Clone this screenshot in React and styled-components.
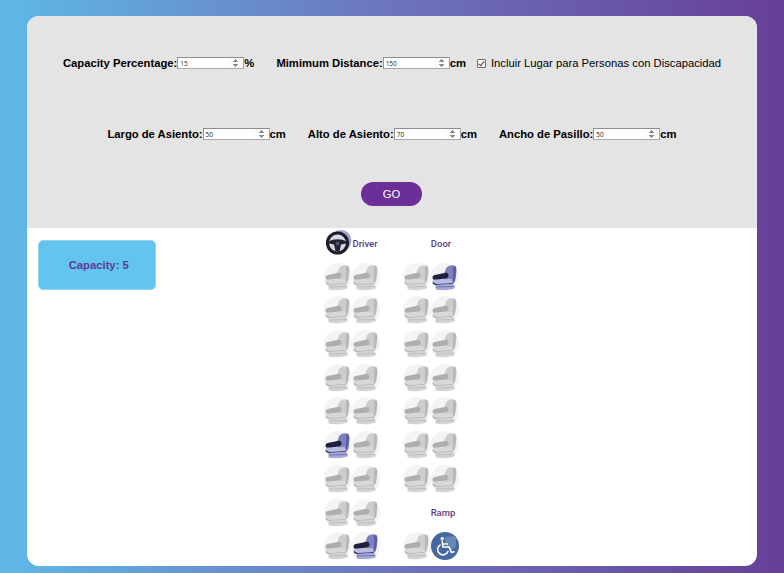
import styled, { createGlobalStyle } from "styled-components";

const GlobalStyle = createGlobalStyle`
  html, body {
    margin: 0;
    height: 100%;
  }
  body {
    font-family: "Liberation Sans", Arial, sans-serif;
    background: linear-gradient(to right, #5eb9e8 0%, #6d74bb 50%, #663f97 100%);
    min-height: 573px;
    overflow: hidden;
  }
`;

const Page = styled.div`
  height: 573px;
  padding: 16px 27px 7px;
  box-sizing: border-box;
`;

const Card = styled.div`
  width: 730px;
  height: 550px;
  background: #fff;
  border-radius: 12px;
  overflow: hidden;
`;

const Header = styled.div`
  height: 212px;
  background: #e4e4e4;
  box-sizing: border-box;
  padding-top: 40px;
  display: flex;
  flex-direction: column;
  align-items: center;
`;

const FormRow = styled.div`
  display: flex;
  align-items: center;
  gap: 22px;
  height: 14px;
  margin-bottom: ${(p) => p.$after}px;
  white-space: nowrap;
  flex-shrink: 0;
`;

const Field = styled.label`
  display: flex;
  align-items: center;
  font-size: 11.25px;
  font-weight: 700;
  color: #000;
`;

const NumberInput = styled.input.attrs({ type: "number" })`
  width: 67px;
  height: 12px;
  box-sizing: border-box;
  margin: 0;
  padding: 0 0 0 2px;
  border: 1.5px solid #a8a8a8;
  border-top-color: #8c8c8c;
  border-left-color: #969696;
  background: #fff;
  font-family: "Open Sans", sans-serif;
  font-size: 6.5px;
  color: #222;

  &::-webkit-inner-spin-button {
    opacity: 1;
    height: 10px;
    width: 8px;
    margin: 0;
  }
`;

const CheckField = styled.label`
  display: flex;
  align-items: center;
  font-size: 11.25px;
  color: #000;
  margin-left: -11px;
`;

const CheckBox = styled.input.attrs({ type: "checkbox" })`
  appearance: none;
  position: relative;
  width: 9px;
  height: 9px;
  margin: 0 5px 0 0;
  border: 1px solid #6e6e6e;
  border-radius: 1px;
  background: #f4f4f4;

  &:checked::after {
    content: "";
    position: absolute;
    left: 2px;
    top: 0;
    width: 2px;
    height: 5px;
    border: solid #4a4a4a;
    border-width: 0 1px 1px 0;
    transform: rotate(40deg);
  }
`;

const GoButton = styled.button`
  width: 61px;
  height: 24px;
  margin-left: -1px;
  border: 0;
  border-radius: 12px;
  background: #6b2f97;
  color: #fff;
  font-family: inherit;
  font-size: 11.25px;
  padding: 0;
`;

const Body = styled.div`
  display: grid;
  grid-template-columns: 1fr 136px 1fr;
  height: 338px;
`;

const CapacityBox = styled.div`
  width: 118.5px;
  height: 50px;
  margin: 11.5px 0 0 10.5px;
  padding-left: 4px;
  background: #63c5ef;
  border: 1px solid #8ed3f1;
  box-sizing: border-box;
  border-radius: 5px;
  display: flex;
  align-items: center;
  justify-content: center;
  color: #5b3a9b;
  font-size: 11.25px;
  font-weight: 700;
`;

const SeatMap = styled.div`
  display: grid;
  grid-template-columns: 28px 28px 23px 28px 28px;
  grid-auto-rows: 28px;
  row-gap: 5.7px;
  padding-top: 1px;
`;

const Label = styled.span`
  grid-column: ${(p) => p.$col};
  align-self: center;
  justify-self: center;
  font-family: Roboto, sans-serif;
  font-size: 9.5px;
  font-weight: 500;
  white-space: nowrap;
  color: #5c3a85;
  transform: translateX(${(p) => p.$shift || 0}px);
`;

const SeatSlot = styled.div`
  grid-column: ${(p) => p.$col};
  width: 28px;
  height: 28px;
`;

const Seat = ({ col, on }) => {
  const back = on ? "#7d7fbe" : "#cdcdcd";
  const backEdge = on ? "#5d5fa5" : "#b8b8b8";
  const cushion = on ? "#1f2040" : "#aeaeae";
  const arm = on ? "#b9bbe2" : "#d8d8d8";
  const base = on ? "#a6a8d8" : "#d4d4d4";
  const edge = on ? "#6b6db0" : "#bcbcbc";
  return (
    <SeatSlot $col={col}>
      <svg width="28" height="28" viewBox="0 0 28 28">
        <circle cx="14" cy="14" r="14" fill="#f4f4f4" />
        <path d="M15 5.5 C16.5 2.5 22 1.5 24.5 3 C26 4.5 25.5 11 24.5 16 C24 19 23 21 20 21 L13 20 L13 11 Z" fill={back} />
        <path d="M22 3 C25 3.5 25.5 5 25 9 L24 17 L22 20 Z" fill={backEdge} />
        <path d="M1.5 14.5 C1.5 12.6 3.2 12 5 11.7 L14.5 9.7 C16.8 9.3 17.5 11 17.5 12.7 C17.5 14.3 16.4 14.9 15 15.2 L5.5 17.2 C3.3 17.4 1.5 16.7 1.5 14.5 Z" fill={cushion} />
        <path d="M1.5 18.8 C1.5 17 3.3 16.5 5 16.5 L20 16 C21.8 16 21.8 20.8 20 20.8 L5 21.3 C2.8 21.3 1.5 20.4 1.5 18.8 Z" fill={arm} />
        <path d="M2 19.3 C2.6 21.2 5 21.6 7 21.5 L21.5 20.8" fill="none" stroke={cushion} strokeWidth="1.1" />
        <path d="M4.5 21.8 L22.5 21 L24 25 C21 27.2 8 27.7 4.5 26.2 Z" fill={base} />
        <path d="M5 24 L23 23.5" stroke={edge} strokeWidth="0.9" />
      </svg>
    </SeatSlot>
  );
};

const SteeringWheel = () => (
  <SeatSlot $col={1}>
    <svg width="28" height="28" viewBox="0 0 28 28">
      <circle cx="17" cy="11.5" r="10.5" fill="#a3a1d0" />
      <circle cx="13.5" cy="14" r="10" fill="#d9d9e6" stroke="#1e1e28" strokeWidth="3.2" />
      <path d="M5 12.5 C9 9.5 18 9.5 22 12.5 L22 14.5 L17 15.5 L15.5 22.5 L11.5 22.5 L10 15.5 L5 14.5 Z" fill="#23232f" />
      <circle cx="13.5" cy="14.5" r="2" fill="#50507a" />
    </svg>
  </SeatSlot>
);

const WheelchairSeat = ({ col }) => (
  <SeatSlot $col={col}>
    <svg width="28" height="28" viewBox="0 0 28 28">
      <circle cx="14" cy="14" r="14" fill="#44689f" />
      <path d="M14 5 L25 4 L25 15 L20 18 L14 12 Z" fill="#6a88b5" />
      <circle cx="11.2" cy="6.6" r="1.7" fill="#fff" />
      <path d="M11.2 9 L12 15 L18 15 L20.5 20.5 L22.8 19.7" fill="none" stroke="#fff" strokeWidth="1.7" strokeLinejoin="round" strokeLinecap="round" />
      <path d="M12 12 L17 12" stroke="#fff" strokeWidth="1.4" />
      <path d="M9.6 12.6 A5.4 5.4 0 1 0 17.2 19" fill="none" stroke="#fff" strokeWidth="1.6" />
    </svg>
  </SeatSlot>
);

// filas de asientos: [col 1, col 2, col 4, col 5], 2 = seleccionado
const rows = [
  [1, 1, 1, 2],
  [1, 1, 1, 1],
  [1, 1, 1, 1],
  [1, 1, 1, 1],
  [1, 1, 1, 1],
  [2, 1, 1, 1],
  [1, 1, 1, 1],
];
const seatCols = [1, 2, 4, 5];

const App = () => {
  return (
    <>
      <GlobalStyle />
      <Page>
        <Card>
          <Header>
            <FormRow $after={57}>
              <Field>
                Capacity Percentage:
                <NumberInput defaultValue="15" />%
              </Field>
              <Field>
                Mimimum Distance:
                <NumberInput defaultValue="150" />
                cm
              </Field>
              <CheckField>
                <CheckBox defaultChecked />
                Incluir Lugar para Personas con Discapacidad
              </CheckField>
            </FormRow>
            <FormRow $after={41}>
              <Field>
                Largo de Asiento:
                <NumberInput defaultValue="50" />
                cm
              </Field>
              <Field>
                Alto de Asiento:
                <NumberInput defaultValue="70" />
                cm
              </Field>
              <Field>
                Ancho de Pasillo:
                <NumberInput defaultValue="50" />
                cm
              </Field>
            </FormRow>
            <GoButton>GO</GoButton>
          </Header>
          <Body>
            <div>
              <CapacityBox>Capacity: 5</CapacityBox>
            </div>
            <SeatMap>
              <SteeringWheel />
              <Label $col="2" $shift={-1}>Driver</Label>
              <Label $col="5" $shift={-4}>Door</Label>
              {rows.map((row) =>
                row.map((kind, i) => <Seat key={`${seatCols[i]}`} col={seatCols[i]} on={kind === 2} />)
              )}
              <Seat col={1} />
              <Seat col={2} />
              <Label $col="5" $shift={-2}>Ramp</Label>
              <Seat col={1} />
              <Seat col={2} on />
              <Seat col={4} />
              <WheelchairSeat col={5} />
            </SeatMap>
            <div />
          </Body>
        </Card>
      </Page>
    </>
  );
};

export default App;
